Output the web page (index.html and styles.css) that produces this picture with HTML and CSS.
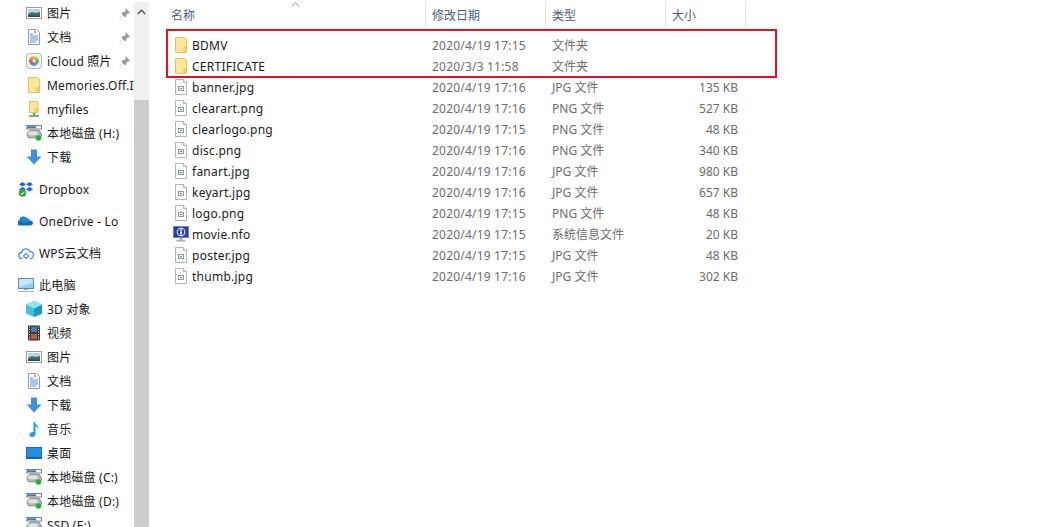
FILE: index.html
```html
<!DOCTYPE html>
<html lang="zh-CN">
<head>
<meta charset="utf-8">
<title>文件资源管理器</title>
<link rel="stylesheet" href="styles.css">
</head>
<body>
<svg class="defs" width="0" height="0" aria-hidden="true">
  <defs>
    <symbol id="i-pic" viewBox="0 0 16 16"><rect x="0.5" y="2.5" width="15" height="11" fill="#fff" stroke="#9a9a9a"/><rect x="2" y="4" width="12" height="8" fill="#b9d3e4"/><path d="M2 9l4-2 3 1 5-1v5H2z" fill="#3f6f6a"/><path d="M2 10.5h12V12H2z" fill="#2b4d55"/></symbol>
    <symbol id="i-doc" viewBox="0 0 16 16"><path d="M2.5.5h8l3 3v12h-11z" fill="#fff" stroke="#9a9a9a"/><path d="M4 5h3M4 7h8M4 9h8M4 11h8M4 13h6" stroke="#4a90d9"/><path d="M8 3h2" stroke="#555"/></symbol>
    <symbol id="i-icloud" viewBox="0 0 16 16"><rect x="0.5" y="0.5" width="15" height="15" rx="3" fill="#f4f4f4" stroke="#b5b5b5"/><circle cx="8" cy="4.8" r="1.9" fill="#f6c02c"/><circle cx="11.2" cy="8" r="1.9" fill="#5cb85c"/><circle cx="8" cy="11.2" r="1.9" fill="#4a90d9"/><circle cx="4.8" cy="8" r="1.9" fill="#e4572e"/><circle cx="10.3" cy="5.7" r="1.7" fill="#a5c83a"/><circle cx="10.3" cy="10.3" r="1.7" fill="#3bb5b0"/><circle cx="5.7" cy="10.3" r="1.7" fill="#9a5fc0"/><circle cx="5.7" cy="5.7" r="1.7" fill="#f08a24"/></symbol>
    <symbol id="i-folder" viewBox="0 0 16 16"><path d="M2.5.5h9.5l1.500 1.500v13.500h-11z" fill="#fce79c" stroke="#e7c35f"/><path d="M11 15.500v-5h2.500v5z" fill="#f5d677" stroke="#e7c35f"/></symbol>
    <symbol id="i-netfolder" viewBox="0 0 16 16"><path d="M3.500.5h8.500v11h-8.500z" fill="#fce79c" stroke="#e7c35f"/><path d="M10 11.500v-4h2v4z" fill="#f5d677" stroke="#e7c35f"/><path d="M8 12v2" stroke="#39a845" stroke-width="2"/><path d="M3 15h10" stroke="#39a845" stroke-width="1.500"/></symbol>
    <symbol id="i-drive" viewBox="0 0 16 16"><rect x="0" y="0.500" width="15.500" height="3.500" fill="#fff" stroke="#666" stroke-width="0.800"/><rect x="1" y="1.200" width="9" height="2" fill="#3a7fc4"/><path d="M1 8.500L4 5h9l2.500 3.500v2.500L13 13H3L1 11z" fill="#b4b8bb" stroke="#777" stroke-width="0.700"/><ellipse cx="7" cy="8.200" rx="5" ry="2" fill="#dfe2e4"/><circle cx="12.500" cy="13" r="2.800" fill="#19b52c"/></symbol>
    <symbol id="i-down" viewBox="0 0 16 16"><path d="M5 0.500h6v7h4.500L8 15.500.5 7.500H5z" fill="#3d8fdf"/></symbol>
    <symbol id="i-dropbox" viewBox="0 0 16 16"><path d="M4.500 1L8 3.300 4.500 5.600 1 3.300zM11.500 1L15 3.300 11.500 5.600 8 3.300zM4.500 6L8 8.300 4.500 10.600 1 8.300zM11.500 6L15 8.300 11.500 10.600 8 8.300z" fill="#1d62d9"/><circle cx="4.500" cy="12" r="3.800" fill="#37a845"/><path d="M2.800 12l1.300 1.300 2.300-2.500" stroke="#fff" fill="none"/></symbol>
    <symbol id="i-onedrive" viewBox="0 0 16 16"><path d="M1 12.500a2.700 2.700 0 0 1 .5-5.300A4 4 0 0 1 9 5.500a3 3 0 0 1 3 2.300 2.400 2.400 0 0 1 3 2.300 2.400 2.400 0 0 1-2.400 2.400z" fill="#0f6cbd"/><path d="M9 5.500a3 3 0 0 1 3 2.300L6 10 2 8a4 4 0 0 1 7-2.500z" fill="#1a8ad4"/></symbol>
    <symbol id="i-wps" viewBox="0 0 16 16"><path d="M4.500 13.500H4a3 3 0 0 1-.500-6A4.500 4.500 0 0 1 12 6.500a3.500 3.500 0 0 1 0 7h-.500" fill="none" stroke="#4f8fe8" stroke-width="1.300"/><path d="M5.500 11L8 13.500 10.500 11 8 8.500z" fill="none" stroke="#4f8fe8" stroke-width="1.200"/></symbol>
    <symbol id="i-pc" viewBox="0 0 16 16"><rect x="0.500" y="1.500" width="15" height="10" fill="#8fd0f5" stroke="#5f8ea8"/><path d="M1 2h14v4L1 10z" fill="#c4e8fb"/><path d="M6 12h4v1H6z" fill="#9aa5ab"/><path d="M0 14h16v1H0z" fill="#a8b2b8"/></symbol>
    <symbol id="i-3d" viewBox="0 0 16 16"><path d="M8 0l8 3.500v9L8 16l-8-3.500v-9z" fill="#3fc3d8"/><path d="M8 7.500L16 3.500v9L8 16z" fill="#1e95c2"/><path d="M8 7.500L0 3.500 8 0l8 3.500z" fill="#8ee6ee"/></symbol>
    <symbol id="i-video" viewBox="0 0 16 16"><rect x="2" y="0.500" width="12" height="15" fill="#3b3b3b"/><path d="M3 2h1M3 4.500h1M3 7h1M3 9.500h1M3 12h1M3 14h1M12 2h1M12 4.500h1M12 7h1M12 9.500h1M12 12h1M12 14h1" stroke="#ddd"/><rect x="5" y="2" width="6" height="5" fill="#5478b8"/><rect x="5" y="9" width="6" height="5" fill="#c0603a"/></symbol>
    <symbol id="i-music" viewBox="0 0 16 16"><path d="M7.500 1h1.500c.3 3 4 3.500 3.500 7.500-.4-2-2-3-3-3.200V13c0 1.700-1.800 3-3.500 3S3.500 15 3.500 13.700 5 11 7.500 11z" fill="#1f9be8"/></symbol>
    <symbol id="i-desk" viewBox="0 0 16 16"><rect x="0.500" y="2.500" width="15" height="11" fill="#1e90e6" stroke="#1670b5"/><path d="M1 12h14v1H1z" fill="#0f5c9c"/></symbol>
    <symbol id="i-pin" viewBox="0 0 12 12"><path d="M7 .5l4.500 4.500-1 .7-.9-.3-2 2 .1 1.900-1 .9L2.900 5.900l.9-1 1.900.1 2-2-.3-.9zM4 8L.5 11.500" fill="#9a9a9a" stroke="#9a9a9a" stroke-width="0.600"/></symbol>
    <symbol id="i-file" viewBox="0 0 16 16"><path d="M2.500.5h8l3 3v12h-11z" fill="#fff" stroke="#b5b5b5"/><path d="M10.500.5v3h3" fill="#f0f0f0" stroke="#b5b5b5"/><rect x="5.500" y="7.500" width="5" height="4" fill="#eef2f5" stroke="#8f9aa5"/><rect x="7" y="9" width="2" height="1" fill="#4f7fb5"/></symbol>
    <symbol id="i-nfo" viewBox="0 0 16 16"><rect x="0.500" y="0.500" width="15" height="11" fill="#2340b5" stroke="#7b8794"/><circle cx="8" cy="6" r="4.300" fill="#fff"/><circle cx="8" cy="6" r="3.300" fill="#2340b5"/><path d="M7 3.500h2v1.200H7zM7 5.500h2V8.500H7z" fill="#fff"/><path d="M6.500 12h3v2h-3zM3.500 14h9v1.500h-9z" fill="#a5adb5"/></symbol>
  </defs>
</svg>
<div class="window">
  <nav class="nav">
    <div class="nav-row sub"><svg class="ic"><use href="#i-pic"/></svg><span class="lbl">图片</span><svg class="pin"><use href="#i-pin"/></svg></div>
    <div class="nav-row sub"><svg class="ic"><use href="#i-doc"/></svg><span class="lbl">文档</span><svg class="pin"><use href="#i-pin"/></svg></div>
    <div class="nav-row sub"><svg class="ic"><use href="#i-icloud"/></svg><span class="lbl">iCloud 照片</span><svg class="pin"><use href="#i-pin"/></svg></div>
    <div class="nav-row sub"><svg class="ic"><use href="#i-folder"/></svg><span class="lbl">Memories.Off.I</span></div>
    <div class="nav-row sub"><svg class="ic"><use href="#i-netfolder"/></svg><span class="lbl">myfiles</span></div>
    <div class="nav-row sub"><svg class="ic"><use href="#i-drive"/></svg><span class="lbl">本地磁盘 (H:)</span></div>
    <div class="nav-row sub"><svg class="ic"><use href="#i-down"/></svg><span class="lbl">下载</span></div>
    <div class="nav-row top gap"><svg class="ic"><use href="#i-dropbox"/></svg><span class="lbl">Dropbox</span></div>
    <div class="nav-row top gap"><svg class="ic"><use href="#i-onedrive"/></svg><span class="lbl">OneDrive - Lo</span></div>
    <div class="nav-row top gap"><svg class="ic"><use href="#i-wps"/></svg><span class="lbl">WPS云文档</span></div>
    <div class="nav-row top gap"><svg class="ic"><use href="#i-pc"/></svg><span class="lbl">此电脑</span></div>
    <div class="nav-row sub"><svg class="ic"><use href="#i-3d"/></svg><span class="lbl">3D 对象</span></div>
    <div class="nav-row sub"><svg class="ic"><use href="#i-video"/></svg><span class="lbl">视频</span></div>
    <div class="nav-row sub"><svg class="ic"><use href="#i-pic"/></svg><span class="lbl">图片</span></div>
    <div class="nav-row sub"><svg class="ic"><use href="#i-doc"/></svg><span class="lbl">文档</span></div>
    <div class="nav-row sub"><svg class="ic"><use href="#i-down"/></svg><span class="lbl">下载</span></div>
    <div class="nav-row sub"><svg class="ic"><use href="#i-music"/></svg><span class="lbl">音乐</span></div>
    <div class="nav-row sub"><svg class="ic"><use href="#i-desk"/></svg><span class="lbl">桌面</span></div>
    <div class="nav-row sub"><svg class="ic"><use href="#i-drive"/></svg><span class="lbl">本地磁盘 (C:)</span></div>
    <div class="nav-row sub"><svg class="ic"><use href="#i-drive"/></svg><span class="lbl">本地磁盘 (D:)</span></div>
    <div class="nav-row sub"><svg class="ic"><use href="#i-drive"/></svg><span class="lbl">SSD (E:)</span></div>
  </nav>
  <div class="scrollbar">
    <div class="scroll-up"><svg class="arrow" viewBox="0 0 9 6"><path d="M.8 5L4.500 1.300 8.200 5" fill="none" stroke="#555" stroke-width="1.400"/></svg></div>
    <div class="scroll-thumb"></div>
  </div>
  <main class="main">
    <div class="head">
      <div class="hcell name">名称<svg class="sort" viewBox="0 0 9 5"><path d="M.5 4.500L4.500 .8 8.500 4.500" fill="none" stroke="#9a9a9a"/></svg></div>
      <div class="hcell">修改日期</div>
      <div class="hcell">类型</div>
      <div class="hcell">大小</div>
    </div>
    <div class="list">
      <div class="highlight"></div>
      <div class="row"><div class="fname"><svg class="ic"><use href="#i-folder"/></svg>BDMV</div><div class="date">2020/4/19 17:15</div><div>文件夹</div><div class="size"></div></div>
      <div class="row"><div class="fname"><svg class="ic"><use href="#i-folder"/></svg>CERTIFICATE</div><div class="date">2020/3/3 11:58</div><div>文件夹</div><div class="size"></div></div>
      <div class="row"><div class="fname"><svg class="ic"><use href="#i-file"/></svg>banner.jpg</div><div class="date">2020/4/19 17:16</div><div>JPG 文件</div><div class="size">135 KB</div></div>
      <div class="row"><div class="fname"><svg class="ic"><use href="#i-file"/></svg>clearart.png</div><div class="date">2020/4/19 17:16</div><div>PNG 文件</div><div class="size">527 KB</div></div>
      <div class="row"><div class="fname"><svg class="ic"><use href="#i-file"/></svg>clearlogo.png</div><div class="date">2020/4/19 17:15</div><div>PNG 文件</div><div class="size">48 KB</div></div>
      <div class="row"><div class="fname"><svg class="ic"><use href="#i-file"/></svg>disc.png</div><div class="date">2020/4/19 17:16</div><div>PNG 文件</div><div class="size">340 KB</div></div>
      <div class="row"><div class="fname"><svg class="ic"><use href="#i-file"/></svg>fanart.jpg</div><div class="date">2020/4/19 17:16</div><div>JPG 文件</div><div class="size">980 KB</div></div>
      <div class="row"><div class="fname"><svg class="ic"><use href="#i-file"/></svg>keyart.jpg</div><div class="date">2020/4/19 17:16</div><div>JPG 文件</div><div class="size">657 KB</div></div>
      <div class="row"><div class="fname"><svg class="ic"><use href="#i-file"/></svg>logo.png</div><div class="date">2020/4/19 17:15</div><div>PNG 文件</div><div class="size">48 KB</div></div>
      <div class="row"><div class="fname"><svg class="ic"><use href="#i-nfo"/></svg>movie.nfo</div><div class="date">2020/4/19 17:15</div><div>系统信息文件</div><div class="size">20 KB</div></div>
      <div class="row"><div class="fname"><svg class="ic"><use href="#i-file"/></svg>poster.jpg</div><div class="date">2020/4/19 17:15</div><div>JPG 文件</div><div class="size">48 KB</div></div>
      <div class="row"><div class="fname"><svg class="ic"><use href="#i-file"/></svg>thumb.jpg</div><div class="date">2020/4/19 17:16</div><div>JPG 文件</div><div class="size">302 KB</div></div>
    </div>
  </main>
</div>
</body>
</html>
```
FILE: styles.css
```css
* { box-sizing: border-box; }
html, body { margin: 0; height: 100%; background: #fff; overflow: hidden; }
body { font: 12px/16px "Noto Sans", "Noto Sans CJK SC", sans-serif; color: #1a1a1a; }
.defs { position: absolute; }
.window { display: flex; height: 527px; width: 1051px; overflow: hidden; }
.nav { width: 134px; flex: none; overflow: hidden; padding-top: 2px; }
.nav-row { display: flex; align-items: center; height: 24px; white-space: nowrap; position: relative; }
.nav-row.sub { padding-left: 26px; }
.nav-row.top { padding-left: 18px; }
.nav-row.gap { margin-top: 8px; }
.ic { width: 16px; height: 16px; flex: none; display: block; margin-top: -2px; }
.lbl { margin-left: 5px; letter-spacing: .2px; }
.pin { width: 11px; height: 11px; position: absolute; left: 119px; top: 6px; }
.scrollbar { width: 15px; flex: none; background: #f0f0f0; display: flex; flex-direction: column; margin-top: 2px; }
.scroll-up { height: 98px; display: flex; justify-content: center; padding-top: 7px; }
.arrow { width: 9px; height: 6px; }
.scroll-thumb { flex: 1; background: #cdcdcd; }
.main { flex: 1; padding-left: 1px; position: relative; }
.head, .row { display: grid; grid-template-columns: 275px 120px 120px 80px; }
.head { height: 29px; padding: 2px 0 0 1px; }
.hcell { border-right: 1px solid #e5e5e5; padding: 6px 0 0 6px; color: #4c607a; position: relative; }
.hcell.name { padding-left: 20px; }
.sort { position: absolute; left: 140px; top: 0; width: 9px; height: 5px; }
.list { position: relative; padding-top: 6px; }
.row { height: 21px; align-items: center; color: #6d6d6d; }
.row > div { padding-left: 7px; }
.row > .fname { display: flex; align-items: center; gap: 3px; padding-left: 23px; color: #1a1a1a; letter-spacing: .25px; }
.row > .date { letter-spacing: .2px; }
.row > .size { padding: 0 7px 0 0; text-align: right; }
.highlight { position: absolute; left: 16px; top: 0; width: 611px; height: 49px; border: 2px solid #e81123; }
```
